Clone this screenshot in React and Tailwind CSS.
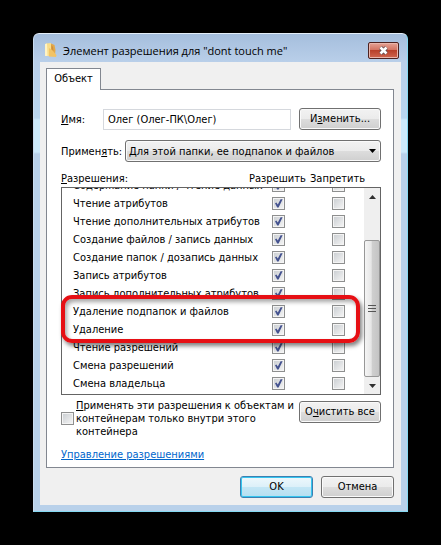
import React from "react";

const permissions = [
  "Содержание папки / чтение данных",
  "Чтение атрибутов",
  "Чтение дополнительных атрибутов",
  "Создание файлов / запись данных",
  "Создание папок / дозапись данных",
  "Запись атрибутов",
  "Запись дополнительных атрибутов",
  "Удаление подпапок и файлов",
  "Удаление",
  "Чтение разрешений",
  "Смена разрешений",
  "Смена владельца",
];

const buttonBase =
  "h-[22px] shrink-0 rounded-[3px] border text-center leading-5 shadow-[inset_0_0_0_1px_#fafafa]";
const buttonGray =
  "border-[#707070] bg-[linear-gradient(#f2f2f2,#ebebeb_50%,#dddddd_50%,#cfcfcf)]";

// Square Windows 7 style tick box
function CheckBox({ id, label, defaultChecked }) {
  return (
    <span className="relative block h-[13px] w-[13px] shrink-0">
      <input
        id={id}
        type="checkbox"
        aria-label={label}
        defaultChecked={defaultChecked}
        className="peer block h-[13px] w-[13px] appearance-none border border-[#8e8f8f] bg-[linear-gradient(135deg,#c8ccd0,#f6f6f6)] shadow-[inset_0_0_0_1px_#f4f4f4]"
      />
      <svg
        viewBox="0 0 13 13"
        className="pointer-events-none absolute inset-0 hidden h-[13px] w-[13px] peer-checked:block"
      >
        <path d="M3 6.2 L4.4 5.4 L5.8 7.6 L8.6 2.2 L10.6 2.2 L6.6 10.6 L5.2 10.6 Z" fill="#44528f" />
      </svg>
    </span>
  );
}

function FolderIcon() {
  return (
    <svg viewBox="0 0 16 16" className="h-4 w-4 shrink-0">
      <path d="M3 1.5 L8 1 L8 14 L3 14 Z" fill="#f9dd8a" />
      <path d="M2 2 L4 1.5 L4.5 14 L2 14 Z" fill="#fff3c4" />
      <path d="M8 1.5 L11.5 3 L12.5 8 L12 13 L8 13 Z" fill="#e3a84a" />
      <path d="M6 6 L9 8 L13.5 13 L13 15 L6 14.5 Z" fill="#f2c365" />
      <path d="M8.5 3 L10 5 L10.5 9 L8.5 7 Z" fill="#cf8f3c" />
    </svg>
  );
}

function TitleBar() {
  return (
    <div className="flex h-7 items-center pl-[3px] pt-1">
      <FolderIcon />
      <h1 className="grow pl-1 font-['Open_Sans','Noto_Sans',sans-serif] text-[11px] text-black">
        Элемент разрешения для "dont touch me"
      </h1>
      <button
        type="button"
        aria-label="Закрыть"
        className="mr-0.5 flex h-[17px] w-[31px] items-center justify-center rounded-[2px] border border-[#4e2220] bg-[linear-gradient(#e5a396,#d2715f_48%,#b8402a_50%,#d0664f)] shadow-[inset_0_0_0_1px_#e9b5ab]"
      >
        <svg viewBox="0 0 11 9" className="h-[9px] w-[11px]">
          <path d="M2.5 1.5 L8.5 7.5 M8.5 1.5 L2.5 7.5" stroke="#5b4a50" strokeWidth="4" />
          <path d="M2.5 1.5 L8.5 7.5 M8.5 1.5 L2.5 7.5" stroke="#ffffff" strokeWidth="2.6" />
        </svg>
      </button>
    </div>
  );
}

function ScrollBar() {
  return (
    <div className="flex w-4 shrink-0 flex-col bg-[#efefef]">
      <button type="button" aria-label="Вверх" className="flex h-[17px] items-center justify-center">
        <svg viewBox="0 0 7 4" className="h-1 w-[7px]">
          <path d="M0 4 L3.5 0 L7 4 Z" fill="#303030" />
        </svg>
      </button>
      <div className="grow" />
      <div className="flex h-[137px] flex-col items-center justify-center gap-0.5 rounded-[2px] border border-[#979797] bg-[linear-gradient(to_right,#f5f5f5,#e6e6e6_45%,#cfcfcf_50%,#c4c4c4)]">
        <div className="h-px w-2 bg-[#555555]" />
        <div className="h-px w-2 bg-[#555555]" />
        <div className="h-px w-2 bg-[#555555]" />
      </div>
      <button type="button" aria-label="Вниз" className="flex h-[17px] items-center justify-center">
        <svg viewBox="0 0 7 4" className="h-1 w-[7px]">
          <path d="M0 0 L3.5 4 L7 0 Z" fill="#303030" />
        </svg>
      </button>
    </div>
  );
}

function PermissionList() {
  return (
    <div className="relative">
      <div className="flex h-[208px] border border-[#646464] bg-white">
        <div className="flex grow flex-col justify-end overflow-hidden pb-[2px]">
          {permissions.map((name) => (
            <div key={name} className="flex h-[18px] shrink-0 items-center pl-[11px] pr-[19px]">
              <span className="grow whitespace-nowrap">{name}</span>
              <CheckBox label={`${name}: разрешить`} defaultChecked />
              <span className="w-[47px] shrink-0" />
              <CheckBox label={`${name}: запретить`} />
            </div>
          ))}
        </div>
        <ScrollBar />
      </div>
      {/* Red frame over the two delete rows */}
      <div className="pointer-events-none absolute left-0 right-[21px] top-[108px] h-12 rounded-[11px] border-4 border-[#e60f14] shadow-[2px_3px_4px_rgba(0,0,0,0.5),inset_2px_3px_4px_rgba(0,0,0,0.35)]" />
    </div>
  );
}

export default function App() {
  return (
    <main className="min-h-screen bg-black p-[33px] font-['DejaVu_Sans_Condensed','DejaVu_Sans',sans-serif] text-[11px] leading-[13px] text-black">
      <section className="rounded-t-[6px] border border-t-[#e4eef8] border-l-[#c9dcf0] border-r-[#85d9f2] border-b-[#85d9f2] bg-[linear-gradient(#a5bedd,#b9cfe9_28px,#b9d6ef_84px,#cdeafb_86px,#cdeafb_118px,#b9d1ea_120px)] px-1.5 pb-1.5">
        <TitleBar />
        <div className="bg-[#f0f0f0] pb-[7px] pl-1.5 pr-[7px] pt-1.5">
          <div className="flex" role="tablist">
            <button
              type="button"
              role="tab"
              aria-selected="true"
              className="relative -mb-px h-[22px] w-[55px] border border-b-0 border-[#828790] bg-white pb-0.5"
            >
              Объект
            </button>
          </div>

          <div className="border border-[#828790] bg-white pb-1.5 pl-3.5 pr-3 pt-[18px]">
            <div className="flex items-center">
              <label htmlFor="name" className="w-[42px] shrink-0">
                <u>И</u>мя:
              </label>
              <input
                id="name"
                readOnly
                defaultValue="Олег (Олег-ПК\Олег)"
                className="h-[21px] w-0 grow border border-[#d5d8dd] px-1 outline-none"
              />
              <button type="button" className={`${buttonBase} ${buttonGray} ml-2 w-[82px]`}>
                И<u>з</u>менить...
              </button>
            </div>

            <div className="mt-2.5 flex items-center">
              <label htmlFor="scope" className="w-16 shrink-0">
                Примен<u>я</u>ть:
              </label>
              <div className="relative grow">
                <select
                  id="scope"
                  className={`${buttonGray} block h-[22px] w-full appearance-none rounded-[3px] border pl-[3px] shadow-[inset_0_0_0_1px_#fafafa]`}
                >
                  <option>Для этой папки, ее подпапок и файлов</option>
                </select>
                <svg viewBox="0 0 7 4" className="pointer-events-none absolute right-[5px] top-[9px] h-1 w-[7px]">
                  <path d="M0 0 L3.5 4 L7 0 Z" fill="#000000" />
                </svg>
              </div>
            </div>

            <div className="mb-0.5 mt-2.5 flex">
              <span className="grow">
                <u>Р</u>азрешения:
              </span>
              <span className="w-[61px]">Разрешить</span>
              <span className="w-[71px]">Запретить</span>
            </div>
            <PermissionList />

            <div className="mt-1 flex items-start">
              <div className="flex grow items-center">
                <CheckBox id="inherit" />
                <label htmlFor="inherit" className="pl-0.5">
                  <u>П</u>рименять эти разрешения к объектам и
                  <br />
                  контейнерам только внутри этого
                  <br />
                  контейнера
                </label>
              </div>
              <button type="button" className={`${buttonBase} ${buttonGray} mt-[2px] w-[82px]`}>
                О<u>ч</u>истить все
              </button>
            </div>

            <a href="#manage" className="mt-2.5 inline-block text-[#0066cc] underline">
              Управление разрешениями
            </a>
          </div>

          <div className="mt-2 flex justify-end gap-2">
            <button
              type="button"
              className="h-[22px] w-[73px] rounded-[3px] border border-[#3c7fb1] bg-[linear-gradient(#eef8fc,#dcf0f9_50%,#c3e6f5_50%,#b5dff0)] text-center leading-5 shadow-[inset_0_0_0_1px_#35c5ef]"
            >
              OK
            </button>
            <button type="button" className={`${buttonBase} ${buttonGray} w-[73px]`}>
              Отмена
            </button>
          </div>
        </div>
      </section>
    </main>
  );
}
